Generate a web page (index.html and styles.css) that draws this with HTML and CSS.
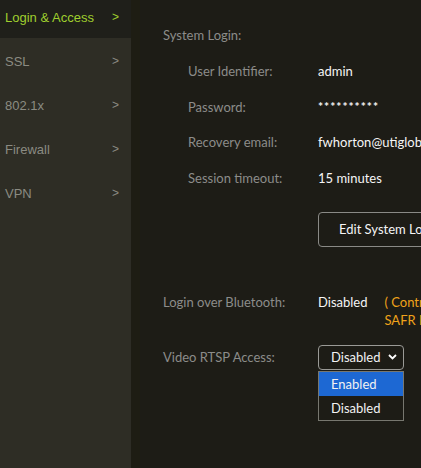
FILE: index.html
```html
<!DOCTYPE html>
<html>
<head>
<meta charset="utf-8">
<link rel="stylesheet" href="styles.css">
</head>
<body>
<div class="app">
  <nav class="sidebar">
    <div class="nav-item active"><span>Login &amp; Access</span><span class="chev">&gt;</span></div>
    <div class="nav-item"><span>SSL</span><span class="chev">&gt;</span></div>
    <div class="nav-item"><span>802.1x</span><span class="chev">&gt;</span></div>
    <div class="nav-item"><span>Firewall</span><span class="chev">&gt;</span></div>
    <div class="nav-item"><span>VPN</span><span class="chev">&gt;</span></div>
  </nav>
  <div class="strip"></div>
  <main class="main">
    <div class="section-title">System Login:</div>
    <div class="rows">
      <div class="row"><span class="label">User Identifier:</span><span class="value">admin</span></div>
      <div class="row"><span class="label">Password:</span><span class="value pw">**********</span></div>
      <div class="row"><span class="label">Recovery email:</span><span class="value">fwhorton@utiglobal.com</span></div>
      <div class="row"><span class="label">Session timeout:</span><span class="value">15 minutes</span></div>
    </div>
    <div class="btn-row"><button class="btn">Edit System Login</button></div>
    <div class="row2">
      <span class="label2">Login over Bluetooth:</span>
      <span class="value">Disabled</span>
      <span class="note">( Control via SAFR<br>SAFR Mobile App )</span>
    </div>
    <div class="row3">
      <span class="label2">Video RTSP Access:</span>
      <div class="select-wrap">
        <div class="select"><span>Disabled</span><svg class="caret" width="9" height="6" viewBox="0 0 9 6"><path d="M1 1 L4.5 4.5 L8 1" fill="none" stroke="#fff" stroke-width="1.8"/></svg></div>
        <div class="menu">
          <div class="opt sel">Enabled</div>
          <div class="opt">Disabled</div>
        </div>
      </div>
    </div>
  </main>
</div>
</body>
</html>
```
FILE: styles.css
```css
html, body { margin: 0; padding: 0; }
body { background: #1d1c16; overflow: hidden; width: 421px; height: 468px; }
.app { display: flex; height: 468px; }
.sidebar { width: 131px; flex: none; background: #2e2d25; font-family: "Liberation Sans", Arial, sans-serif; font-size: 13px; }
.nav-item { display: flex; justify-content: space-between; align-items: center; height: 44px; padding: 2px 12px 0 5px; color: #8b8b82; box-sizing: border-box; }
.nav-item.active { background: #1f1f1a; color: #9fcf2e; height: 38px; padding: 0 12px 4px 5px; }
.chev { font-size: 12px; }
.strip { width: 9px; flex: none; background: #1e1d13; }
.main { flex: 1; padding: 26px 0 0 23px; font-family: "Lato", "Open Sans", sans-serif; font-size: 13px; color: #f2f2f2; white-space: nowrap; overflow: hidden; }
.section-title { color: #8c8c8a; height: 18px; line-height: 18px; }
.rows { padding: 9px 0 0 25px; }
.row { display: flex; height: 35.7px; align-items: center; }
.label { width: 130px; flex: none; color: #8c8c8a; }
.value { color: #f5f5f5; }
.pw { font-size: 12px; letter-spacing: 1px; font-weight: bold; }
.btn-row { padding: 16px 0 0 155px; }
.btn { display: block; background: transparent; color: #f5f5f5; border: 1px solid #8a8a86; border-radius: 4px; height: 35px; width: 140px; font-family: inherit; font-size: 13px; text-align: left; padding: 0 0 0 20px; }
.row2 { display: flex; align-items: flex-start; margin-top: 46px; line-height: 18px; }
.label2 { width: 155px; flex: none; color: #8c8c8a; }
.note { color: #f0a31a; margin-left: 17px; }
.row3 { display: flex; align-items: center; margin-top: 16px; position: relative; }
.select-wrap { position: relative; }
.select { width: 86px; height: 25px; box-sizing: border-box; border: 1px solid #9a9a96; border-radius: 4px; display: flex; align-items: center; justify-content: space-between; padding: 0 6px 0 12px; background: #1d1c16; }
.menu { position: absolute; top: 26px; left: 0; width: 86px; box-sizing: border-box; border: 1px solid #77776f; background: #1d1c16; }
.opt { height: 24px; line-height: 24px; padding-left: 12px; }
.opt.sel { background: #1d68d3; }
```
